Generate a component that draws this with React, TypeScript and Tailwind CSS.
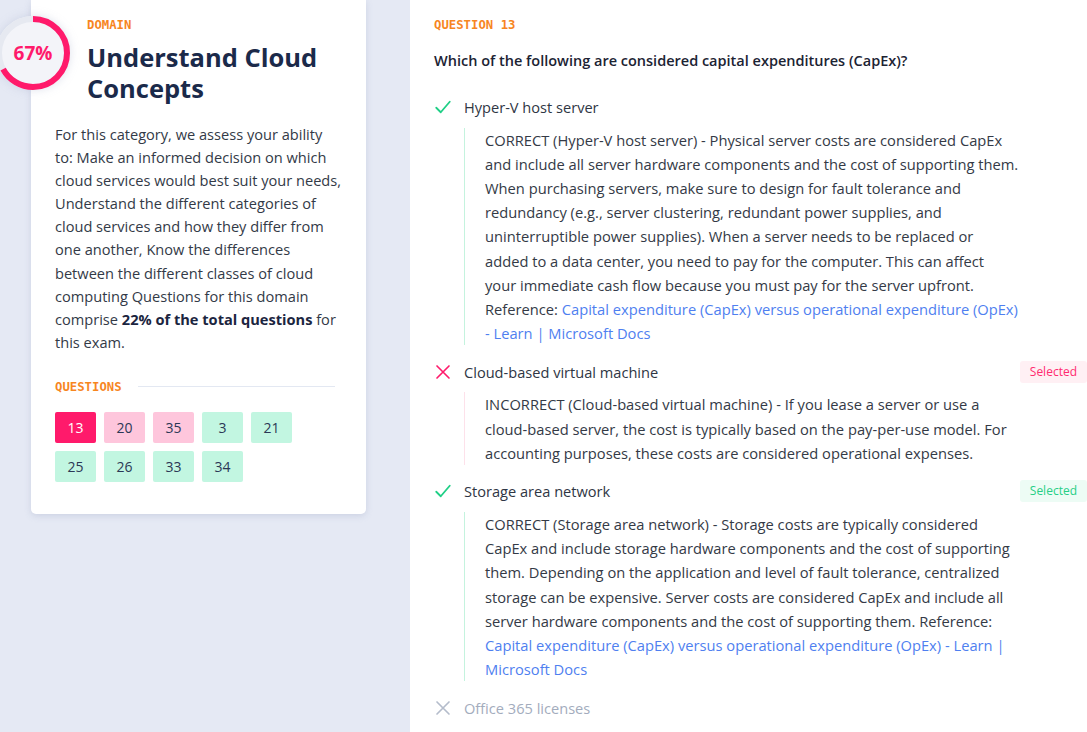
import React from "react";

const sans = { fontFamily: '"Open Sans", "Noto Sans", sans-serif' };
const mono = { fontFamily: '"DejaVu Sans Mono", "Liberation Mono", monospace' };

function CheckIcon({ color }: { color: string }) {
  return (
    <svg width="18" height="18" viewBox="0 0 24 24" fill="none" stroke={color} strokeWidth="2.4" strokeLinecap="round" strokeLinejoin="round">
      <path d="M3 13l6 6L21 5" />
    </svg>
  );
}

function XIcon({ color }: { color: string }) {
  return (
    <svg width="18" height="18" viewBox="0 0 24 24" fill="none" stroke={color} strokeWidth="2.2" strokeLinecap="round">
      <path d="M4 4l16 16M20 4L4 20" />
    </svg>
  );
}

function Ring() {
  const r = 34;
  const c = 2 * Math.PI * r;
  return (
    <div className="absolute left-[-35px] top-[16px] w-[74px] h-[74px] rounded-full bg-[#f3f4f9] shadow-[0_0_10px_rgba(160,170,200,0.35)]">
      <svg width="74" height="74" viewBox="0 0 74 74" className="absolute inset-0">
        <circle cx="37" cy="37" r={r} fill="none" stroke="#e6e9f1" strokeWidth="6" />
        <circle
          cx="37"
          cy="37"
          r={r}
          fill="none"
          stroke="#ff1a6b"
          strokeWidth="6"
          strokeDasharray={`${c * 0.67} ${c}`}
          transform="rotate(-90 37 37)"
        />
      </svg>
      <div className="absolute inset-0 flex items-center justify-center text-[19px] font-bold text-[#ff1a6b]" style={sans}>
        67%
      </div>
    </div>
  );
}

const buttons: { n: string; kind: "cur" | "wrong" | "right" }[] = [
  { n: "13", kind: "cur" },
  { n: "20", kind: "wrong" },
  { n: "35", kind: "wrong" },
  { n: "3", kind: "right" },
  { n: "21", kind: "right" },
  { n: "25", kind: "right" },
  { n: "26", kind: "right" },
  { n: "33", kind: "right" },
  { n: "34", kind: "right" },
];

function QButton({ n, kind }: { n: string; kind: "cur" | "wrong" | "right" }) {
  const cls =
    kind === "cur"
      ? "bg-[#ff1a6b] text-white"
      : kind === "wrong"
      ? "bg-[#fec6dc] text-[#2b3856]"
      : "bg-[#c2f6e1] text-[#2b3856]";
  return (
    <div className={`w-[41px] h-[31px] rounded-[2px] flex items-center justify-center text-[14px] ${cls}`}>{n}</div>
  );
}

function Link({ children }: { children: React.ReactNode }) {
  return <span className="text-[#4f7ff0]">{children}</span>;
}

function Option({
  label,
  state,
  selected,
  children,
}: {
  label: string;
  state: "correct" | "incorrect" | "muted";
  selected?: boolean;
  children?: React.ReactNode;
}) {
  const iconColor = state === "correct" ? "#1fcf86" : state === "incorrect" ? "#ff1a6b" : "#b4bccb";
  const textColor = state === "muted" ? "text-[#a3acbd]" : "text-[#2f3644]";
  const border = state === "incorrect" ? "border-[#fde1ea]" : "border-[#c4f3de]";
  return (
    <div className="flex flex-col">
      <div className="flex items-center h-[24px]">
        <div className="w-[18px] flex justify-center">
          {state === "correct" ? <CheckIcon color={iconColor} /> : <XIcon color={iconColor} />}
        </div>
        <div className={`ml-[12px] text-[14.6px] leading-[24px] flex-1 ${textColor}`}>{label}</div>
        {selected && (
          <div
            className={`h-[22px] px-[10px] rounded-[3px] flex items-center text-[12px] ${
              state === "incorrect" ? "bg-[#fff0f4] text-[#ff2b70]" : "bg-[#edfcf5] text-[#27cf86]"
            }`}
          >
            Selected
          </div>
        )}
      </div>
      {children && (
        <div className={`mt-[8.5px] ml-[30px] border-l ${border} pl-[20px]`}>
          <div className="max-w-[537px] text-[14.7px] leading-[24.2px] text-[#343a46]">{children}</div>
        </div>
      )}
    </div>
  );
}

export default function App() {
  return (
    <div className="w-[1087px] h-[732px] overflow-hidden bg-[#e5e9f4] flex" style={sans}>
      <div className="pl-[31px] shrink-0">
        <div className="relative w-[335px] bg-white rounded-b-[5px] shadow-[0_2px_6px_rgba(150,160,190,0.3)] pt-[17px] pb-[32px]">
          <Ring />
          <div className="pl-[56px] pr-[20px]">
            <div className="text-[12.3px] leading-[16px] font-bold text-[#f7861f]" style={mono}>
              DOMAIN
            </div>
            <h1 className="mt-[9px] text-[25.5px] leading-[31px] font-bold text-[#1b2a4a]">Understand Cloud Concepts</h1>
          </div>
          <div className="pl-[24px] pr-[20px]">
            <p className="mt-[19px] text-[14.6px] leading-[23.1px] text-[#333a47]">
              For this category, we assess your ability
              <br />
              to: Make an informed decision on which cloud services would best suit your needs, Understand the different
              categories of cloud services and how they differ from one another, Know the differences between the
              different classes of cloud computing Questions for this domain comprise{" "}
              <b className="text-[#1b2540]">22% of the total questions</b> for this exam.
            </p>
            <div className="mt-[25px] flex items-center pr-[11px]">
              <div className="text-[12.3px] leading-[16px] font-bold text-[#f7861f]" style={mono}>
                QUESTIONS
              </div>
              <div className="ml-[16px] flex-1 h-px bg-[#e3e8f2]" />
            </div>
            <div className="mt-[17px] grid grid-cols-[repeat(5,41px)] gap-[8px]">
              {buttons.map((b) => (
                <QButton key={b.n} n={b.n} kind={b.kind} />
              ))}
            </div>
          </div>
        </div>
      </div>
      <div className="ml-[44px] flex-1 bg-white pl-[24px] pt-[17px]">
        <div className="text-[12.3px] leading-[16px] font-bold text-[#f7861f]" style={mono}>
          QUESTION 13
        </div>
        <div className="mt-[16px] text-[14.5px] leading-[24px] font-semibold text-[#1c2333]">
          Which of the following are considered capital expenditures (CapEx)?
        </div>
        <div className="mt-[22px] flex flex-col gap-[14.5px]">
          <Option label="Hyper-V host server" state="correct">
            CORRECT (Hyper-V host server) - Physical server costs are considered CapEx and include all server hardware
            components and the cost of supporting them. When purchasing servers, make sure to design for fault tolerance
            and redundancy (e.g., server clustering, redundant power supplies, and uninterruptible power supplies). When a
            server needs to be replaced or
            <br />
            added to a data center, you need to pay for the computer. This can affect
            <br />
            your immediate cash flow because you must pay for the server upfront. Reference:{" "}
            <Link>Capital expenditure (CapEx) versus operational expenditure (OpEx) - Learn | Microsoft Docs</Link>
          </Option>
          <Option label="Cloud-based virtual machine" state="incorrect" selected>
            INCORRECT (Cloud-based virtual machine) - If you lease a server or use a cloud-based server, the cost is
            typically based on the pay-per-use model. For accounting purposes, these costs are considered operational
            expenses.
          </Option>
          <Option label="Storage area network" state="correct" selected>
            CORRECT (Storage area network) - Storage costs are typically considered CapEx and include storage hardware
            components and the cost of supporting them. Depending on the application and level of fault tolerance,
            centralized storage can be expensive. Server costs are considered CapEx and include all server hardware
            components and the cost of supporting them. Reference:{" "}
            <Link>Capital expenditure (CapEx) versus operational expenditure (OpEx) - Learn | Microsoft Docs</Link>
          </Option>
          <Option label="Office 365 licenses" state="muted" />
        </div>
      </div>
    </div>
  );
}
